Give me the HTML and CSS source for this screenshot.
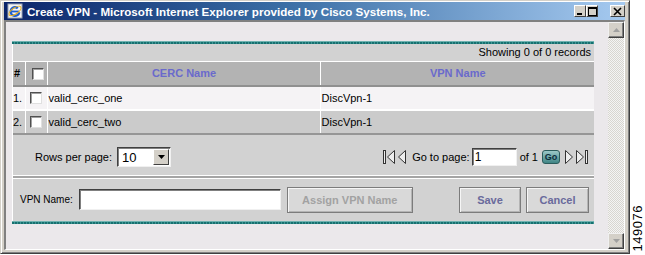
FILE: index.html
```html
<!DOCTYPE html>
<html lang="en">
<head>
    <meta charset="UTF-8">
    <title>Create VPN</title>
    <link rel="stylesheet" href="styles.css">
</head>
<body>
    <div class="screen">
        <div class="window">
            <!-- Title bar -->
            <div class="titlebar">
                <svg class="ie-icon" width="16" height="16" viewBox="0 0 16 16">
                    <rect x="1" y="1" width="14" height="14" fill="#f4f4f4" stroke="#9aa4b8"/>
                    <circle cx="8" cy="8.5" r="4.3" fill="none" stroke="#1f5fd0" stroke-width="2.4" stroke-dasharray="22 5" transform="rotate(10 8 8.5)"/>
                    <rect x="4.5" y="7.6" width="7.5" height="1.8" fill="#1f5fd0"/>
                    <ellipse cx="8" cy="8" rx="7" ry="3" fill="none" stroke="#e8b020" stroke-width="1.1" transform="rotate(-35 8 8)"/>
                </svg>
                <span class="title">Create VPN - Microsoft Internet Explorer provided by Cisco Systems, Inc.</span>
                <div class="caption-buttons">
                    <span class="cap-btn"><svg width="9" height="9" viewBox="0 0 9 9"><rect x="1" y="6" width="5" height="2" fill="#000"/></svg></span>
                    <span class="cap-btn"><svg width="9" height="9" viewBox="0 0 9 9"><rect x="0.5" y="0.5" width="8" height="8" fill="none" stroke="#000"/><rect x="0.5" y="0.5" width="8" height="1.5" fill="#000"/></svg></span>
                    <span class="cap-btn close"><svg width="9" height="9" viewBox="0 0 9 9"><path d="M1 1 L8 8 M8 1 L1 8" stroke="#000" stroke-width="1.6"/></svg></span>
                </div>
            </div>

            <div class="client">
                <div class="page">
                    <div class="teal-rule"></div>
                    <div class="panel">
                        <div class="records">Showing 0 of 0 records</div>

                        <table class="grid">
                            <colgroup>
                                <col class="col-num">
                                <col class="col-check">
                                <col class="col-cerc">
                                <col class="col-vpn">
                            </colgroup>
                            <thead>
                                <tr>
                                    <th class="num">#</th>
                                    <th><span class="checkbox"></span></th>
                                    <th>CERC Name</th>
                                    <th>VPN Name</th>
                                </tr>
                            </thead>
                            <tbody>
                                <tr class="row-light">
                                    <td class="num">1.</td>
                                    <td><span class="checkbox"></span></td>
                                    <td>valid_cerc_one</td>
                                    <td>DiscVpn-1</td>
                                </tr>
                                <tr class="row-dark">
                                    <td class="num">2.</td>
                                    <td><span class="checkbox"></span></td>
                                    <td>valid_cerc_two</td>
                                    <td>DiscVpn-1</td>
                                </tr>
                            </tbody>
                        </table>

                        <!-- Paging controls -->
                        <div class="pager">
                            <span>Rows per page:</span>
                            <div class="select">
                                <span class="select-value">10</span>
                                <span class="select-arrow"><svg width="7" height="4" viewBox="0 0 7 4"><path d="M0 0 H7 L3.5 4 Z" fill="#000"/></svg></span>
                            </div>

                            <div class="pager-nav">
                                <svg class="nav-icon" width="12" height="16" viewBox="0 0 12 16">
                                    <rect x="0.5" y="1.5" width="2" height="13" fill="#eee" stroke="#333"/>
                                    <path d="M11.5 1.5 L4.5 8 L11.5 14.5 Z" fill="#eee" stroke="#333"/>
                                </svg>
                                <svg class="nav-icon" width="9" height="16" viewBox="0 0 9 16">
                                    <path d="M8.5 1.5 L1.5 8 L8.5 14.5 Z" fill="#eee" stroke="#333"/>
                                </svg>
                                <span class="goto-label">Go to page:</span>
                                <input class="page-input" type="text" value="1">
                                <span class="of-label">of 1</span>
                                <span class="go-btn">Go</span>
                                <svg class="nav-icon" width="9" height="16" viewBox="0 0 9 16">
                                    <path d="M0.5 1.5 L7.5 8 L0.5 14.5 Z" fill="#eee" stroke="#333"/>
                                </svg>
                                <svg class="nav-icon" width="12" height="16" viewBox="0 0 12 16">
                                    <path d="M0.5 1.5 L7.5 8 L0.5 14.5 Z" fill="#eee" stroke="#333"/>
                                    <rect x="9.5" y="1.5" width="2" height="13" fill="#eee" stroke="#333"/>
                                </svg>
                            </div>
                        </div>

                        <div class="separator"></div>

                        <!-- VPN name form -->
                        <div class="vpn-row">
                            <label class="vpn-label" for="vpnName">VPN Name:</label>
                            <input class="vpn-input" type="text" id="vpnName">
                            <button class="btn btn-assign" disabled>Assign VPN Name</button>
                            <button class="btn btn-save">Save</button>
                            <button class="btn btn-cancel">Cancel</button>
                        </div>
                    </div>
                    <div class="teal-rule"></div>
                </div>

                <div class="scrollbar">
                    <span class="scroll-btn"><svg width="7" height="4" viewBox="0 0 7 4"><path d="M0 4 H7 L3.5 0 Z" fill="#a0a0a0"/></svg></span>
                    <span class="scroll-track"></span>
                    <span class="scroll-btn"><svg width="7" height="4" viewBox="0 0 7 4"><path d="M0 0 H7 L3.5 4 Z" fill="#a0a0a0"/></svg></span>
                </div>
            </div>
        </div>

        <div class="figure-strip">
            <span class="figure-id">149076</span>
        </div>
    </div>
</body>
</html>
```

FILE: styles.css
```css
* {
    box-sizing: border-box;
}

body {
    margin: 0;
    font-family: "Liberation Sans", Arial, sans-serif;
    font-size: 11px;
    color: #000;
    background-color: #fff;
}

.screen {
    display: flex;
    width: 645px;
    height: 255px;
}

/* Window frame */
.window {
    width: 630px;
    height: 254px;
    display: flex;
    flex-direction: column;
    background-color: #d4d0c8;
    border: 1px solid;
    border-color: #d4d0c8 #404040 #404040 #d4d0c8;
    box-shadow: inset 1px 1px #fff, inset -1px -1px #808080;
    padding: 1px 4px 3px 3px;
}

.titlebar {
    height: 18px;
    display: flex;
    align-items: center;
    padding-left: 3px;
    background: linear-gradient(90deg, #0a246a 0%, #3a6ea5 45%, #a6caf0 100%);
    color: #fff;
}

.ie-icon {
    flex: none;
}

.title {
    margin-left: 4px;
    font-weight: bold;
    font-size: 11.6px;
    white-space: nowrap;
}

.caption-buttons {
    margin-left: auto;
    display: flex;
}

.cap-btn {
    width: 12px;
    height: 12px;
    display: flex;
    align-items: center;
    justify-content: center;
    background-color: #d4d0c8;
    border: 1px solid;
    border-color: #fff #404040 #404040 #fff;
}

.cap-btn.close {
    width: 15px;
    margin-left: 12px;
}

.client {
    flex: 1;
    display: flex;
    border: 2px solid;
    border-color: #808080 #fff #fff #808080;
    border-right-width: 1px;
    border-bottom-width: 1px;
}

.page {
    flex: 1;
    background-color: #ebe8eb;
    padding: 19px 14px 0 6px;
}

.teal-rule {
    height: 3px;
    background: repeating-linear-gradient(90deg, #16706f 0 2px, #3f9594 2px 3px);
    border-top: 1px solid #6fb2b0;
}

.panel {
    background-color: #d2d2d2;
    border-left: 1px solid #fff;
}

.records {
    height: 17px;
    line-height: 17px;
    text-align: right;
    padding-right: 3px;
}

/* Data grid */
.grid {
    width: 100%;
    table-layout: fixed;
    border-collapse: collapse;
    border-top: 1px solid #fff;
}

.col-num { width: 12px; }
.col-check { width: 22px; }
.col-cerc { width: 273px; }

.grid th,
.grid td {
    height: 24px;
    padding: 0 0 0 1px;
    border-left: 1px solid #fff;
    white-space: nowrap;
    text-align: left;
}

.grid th:first-child,
.grid td:first-child {
    border-left: none;
}

.grid th {
    background-color: #b3b3b3;
    color: #6a6acc;
    font-weight: bold;
    text-align: center;
    border-bottom: 2px solid #909090;
}

.grid th.num {
    color: #000;
    text-align: left;
}

.row-light td {
    background-color: #f5f3f5;
    border-bottom: 2px solid #fff;
}

.row-dark td {
    background-color: #cbcbcb;
    border-bottom: 2px solid #969696;
}

.grid td.num {
    padding-left: 0;
}

.checkbox {
    display: inline-block;
    width: 12px;
    height: 12px;
    margin-left: 3px;
    vertical-align: middle;
    background-color: #fff;
    border: 1px solid;
    border-color: #505050 #e0e0e0 #e0e0e0 #505050;
    box-shadow: inset 1px 1px #a0a0a0;
}

/* Pager */
.pager {
    height: 40px;
    display: flex;
    align-items: center;
    padding: 5px 0 0 22px;
}

.select {
    margin-left: 5px;
    width: 54px;
    height: 20px;
    display: flex;
    align-items: center;
    background-color: #fff;
    border: 1px solid;
    border-color: #404040 #f0f0f0 #f0f0f0 #404040;
    box-shadow: inset 1px 1px #808080;
}

.select-value {
    flex: 1;
    padding-left: 4px;
    font-size: 13px;
}

.select-arrow {
    width: 16px;
    height: 16px;
    margin-right: 1px;
    display: flex;
    align-items: center;
    justify-content: center;
    background-color: #d4d0c8;
    border: 1px solid;
    border-color: #fff #404040 #404040 #fff;
}

.pager-nav {
    margin-left: auto;
    padding-right: 6px;
    display: flex;
    align-items: center;
}

.nav-icon {
    margin-left: 2px;
}

.goto-label {
    margin-left: 6px;
}

.page-input {
    width: 45px;
    height: 18px;
    margin: 0 0 0 2px;
    padding: 0 2px;
    font-family: "Liberation Sans", Arial, sans-serif;
    font-size: 12px;
    border: 1px solid;
    border-color: #404040 #f0f0f0 #f0f0f0 #404040;
    box-shadow: inset 1px 1px #808080;
}

.of-label {
    margin-left: 3px;
}

.go-btn {
    margin: 0 3px 0 4px;
    width: 18px;
    height: 14px;
    line-height: 12px;
    text-align: center;
    font-size: 9px;
    font-weight: bold;
    color: #0c2c3c;
    background: linear-gradient(#9cc8c8, #3f8585);
    border: 1px solid #2c5c5c;
    border-radius: 3px;
}

.separator {
    height: 4px;
    border-top: 1px solid #fff;
    border-bottom: 1px solid #fff;
    background-color: #a5a5a5;
}

/* VPN name row */
.vpn-row {
    height: 42px;
    display: flex;
    align-items: center;
    padding: 0 5px 0 7px;
}

.vpn-label {
    font-size: 10px;
}

.vpn-input {
    width: 202px;
    height: 21px;
    margin-left: 6px;
    background-color: #fff;
    border: 1px solid;
    border-color: #404040 #f0f0f0 #f0f0f0 #404040;
    box-shadow: inset 1px 1px #808080;
}

.btn {
    height: 26px;
    font-family: "Liberation Sans", Arial, sans-serif;
    font-size: 11px;
    font-weight: bold;
    background-color: #d9d9d9;
    border: 1px solid #7c7c7c;
    box-shadow: inset 1px 1px #f6f6f6, inset -1px -1px #b4b4b4;
    padding: 0;
}

.btn-assign {
    width: 126px;
    margin-left: 6px;
    color: #a2a2a2;
}

.btn-save {
    width: 62px;
    margin-left: auto;
    color: #6a6a9c;
}

.btn-cancel {
    width: 63px;
    margin-left: 5px;
    color: #6a6a9c;
}

/* Scrollbar */
.scrollbar {
    width: 16px;
    display: flex;
    flex-direction: column;
}

.scroll-btn {
    height: 16px;
    display: flex;
    align-items: center;
    justify-content: center;
    background-color: #d4d0c8;
    border: 1px solid;
    border-color: #f0f0f0 #404040 #404040 #f0f0f0;
    box-shadow: inset -1px -1px #808080;
}

.scroll-track {
    flex: 1;
    background: repeating-conic-gradient(#f4f4f4 0 25%, #d8d6d0 0 50%) 0 0 / 2px 2px;
}

/* Figure number at the right edge */
.figure-strip {
    flex: 1;
    display: flex;
    align-items: flex-end;
    justify-content: center;
    padding-bottom: 4px;
}

.figure-id {
    writing-mode: vertical-rl;
    transform: rotate(180deg);
    font-size: 13px;
    letter-spacing: 0.5px;
}
```
